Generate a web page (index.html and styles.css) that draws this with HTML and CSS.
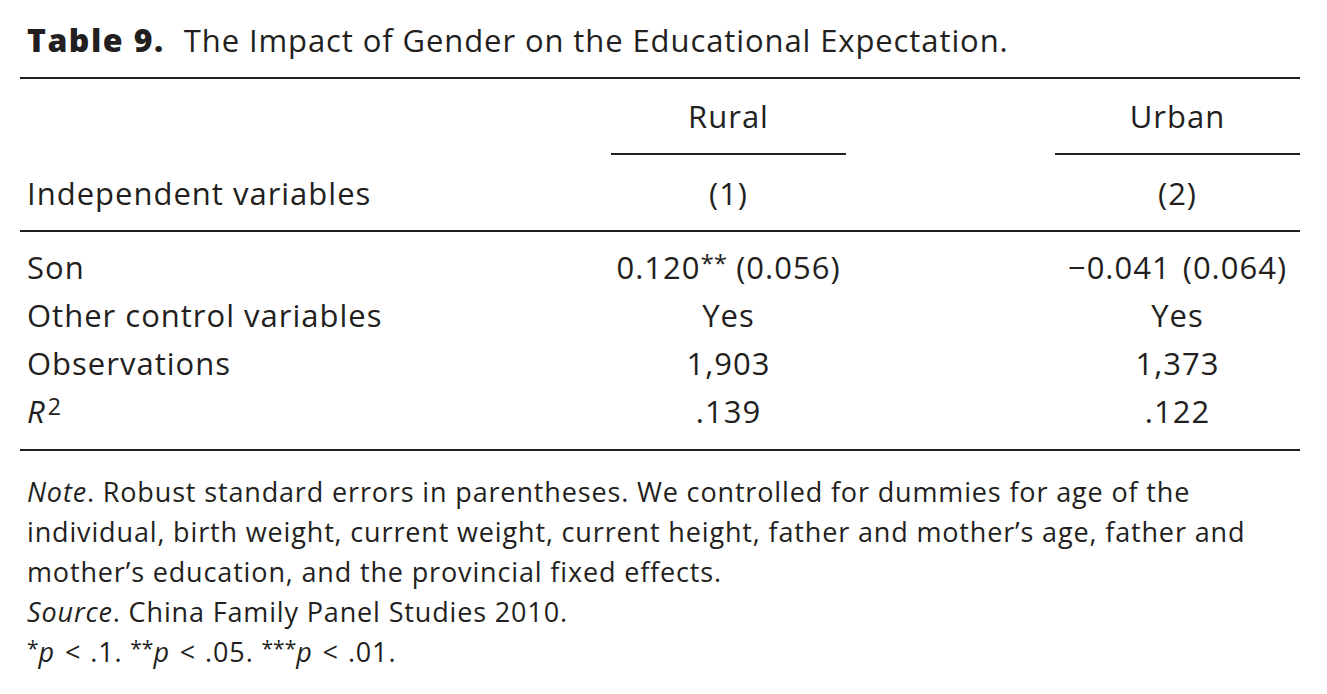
FILE: index.html
```html
<!DOCTYPE html>
<html>
<head>
<meta charset="utf-8">
<link rel="stylesheet" href="styles.css">
</head>
<body>
<div class="page">
  <div class="caption"><span class="caption-label">Table 9.</span> <span class="caption-text">The Impact of Gender on the Educational Expectation.</span></div>
  <div class="tbl">
    <div class="row head-top">
      <div class="cell"></div>
      <div class="cell ctr grp">Rural</div>
      <div class="cell"></div>
      <div class="cell ctr grp">Urban</div>
    </div>
    <div class="row head-bottom">
      <div class="cell lbl">Independent variables</div>
      <div class="cell ctr">(1)</div>
      <div class="cell"></div>
      <div class="cell ctr">(2)</div>
    </div>
    <div class="body">
      <div class="row data">
        <div class="cell lbl">Son</div>
        <div class="cell ctr">0.120<sup class="star">**</sup> (0.056)</div>
        <div class="cell"></div>
        <div class="cell ctr">&minus;0.041 <span class="se">(0.064)</span></div>
      </div>
      <div class="row data">
        <div class="cell lbl">Other control variables</div>
        <div class="cell ctr">Yes</div>
        <div class="cell"></div>
        <div class="cell ctr">Yes</div>
      </div>
      <div class="row data">
        <div class="cell lbl">Observations</div>
        <div class="cell ctr">1,903</div>
        <div class="cell"></div>
        <div class="cell ctr">1,373</div>
      </div>
      <div class="row data">
        <div class="cell lbl"><i>R</i><sup class="sq">2</sup></div>
        <div class="cell ctr">.139</div>
        <div class="cell"></div>
        <div class="cell ctr">.122</div>
      </div>
    </div>
  </div>
  <div class="notes">
    <p class="note"><i>Note</i>. Robust standard errors in parentheses. We controlled for dummies for age of the<br>individual, birth weight, current weight, current height, father and mother’s age, father and<br>mother’s education, and the provincial fixed effects.</p>
    <p class="note"><i>Source</i>. China Family Panel Studies 2010.</p>
    <p class="note"><sup class="nstar">*</sup><i>p</i> <span class="lt">&lt;</span> .1. <sup class="nstar">**</sup><i>p</i> <span class="lt">&lt;</span> .05. <sup class="nstar">***</sup><i>p</i> <span class="lt">&lt;</span> .01.</p>
  </div>
</div>
</body>
</html>
```
FILE: styles.css
```css
html, body {
  margin: 0;
  padding: 0;
  background: #ffffff;
}
body {
  font-family: "Open Sans", Lato, sans-serif;
  color: #231f20;
}
.page {
  padding: 16px 27px 0 20px;
  width: 1280px;
}
.caption {
  font-size: 31px;
  line-height: 48px;
  letter-spacing: 0.9px;
  padding-left: 7px;
  white-space: nowrap;
}
.caption-label {
  font-size: 32px;
  font-weight: 800;
  letter-spacing: 1.5px;
  margin-right: 10px;
}
.tbl {
  margin-top: 13px;
  border-top: 2px solid #231f20;
  border-bottom: 2px solid #231f20;
  font-size: 31px;
  letter-spacing: 1px;
}
.row {
  display: grid;
  grid-template-columns: 591px 235px 209px 245px;
}
.head-top {
  height: 76px;
  align-items: center;
}
.head-top .grp {
  align-self: stretch;
  display: flex;
  align-items: center;
  justify-content: center;
  border-bottom: 2px solid #231f20;
}
.head-bottom {
  height: 75px;
  align-items: center;
  border-bottom: 2px solid #231f20;
}
.body {
  padding: 11px 0 14px;
}
.data {
  height: 48px;
  align-items: center;
}
.cell {
  line-height: 40px;
  white-space: nowrap;
}
.lbl {
  padding-left: 7px;
}
.ctr {
  text-align: center;
}
.se {
  margin-left: 3px;
}
.star {
  font-size: 0.78em;
  vertical-align: 0.3em;
  line-height: 0;
  letter-spacing: 0;
}
.sq {
  font-size: 0.75em;
  vertical-align: 0.35em;
  line-height: 0;
  margin-left: 2px;
}
.notes {
  margin-top: 21px;
}
.note {
  margin: 0;
  padding-left: 7px;
  font-size: 27px;
  line-height: 40px;
  letter-spacing: 0.85px;
  white-space: nowrap;
}
.nstar {
  font-size: 0.78em;
  vertical-align: 0.3em;
  line-height: 0;
  letter-spacing: 0;
}
.lt {
  letter-spacing: 0;
  margin: 0 2px;
}
```
